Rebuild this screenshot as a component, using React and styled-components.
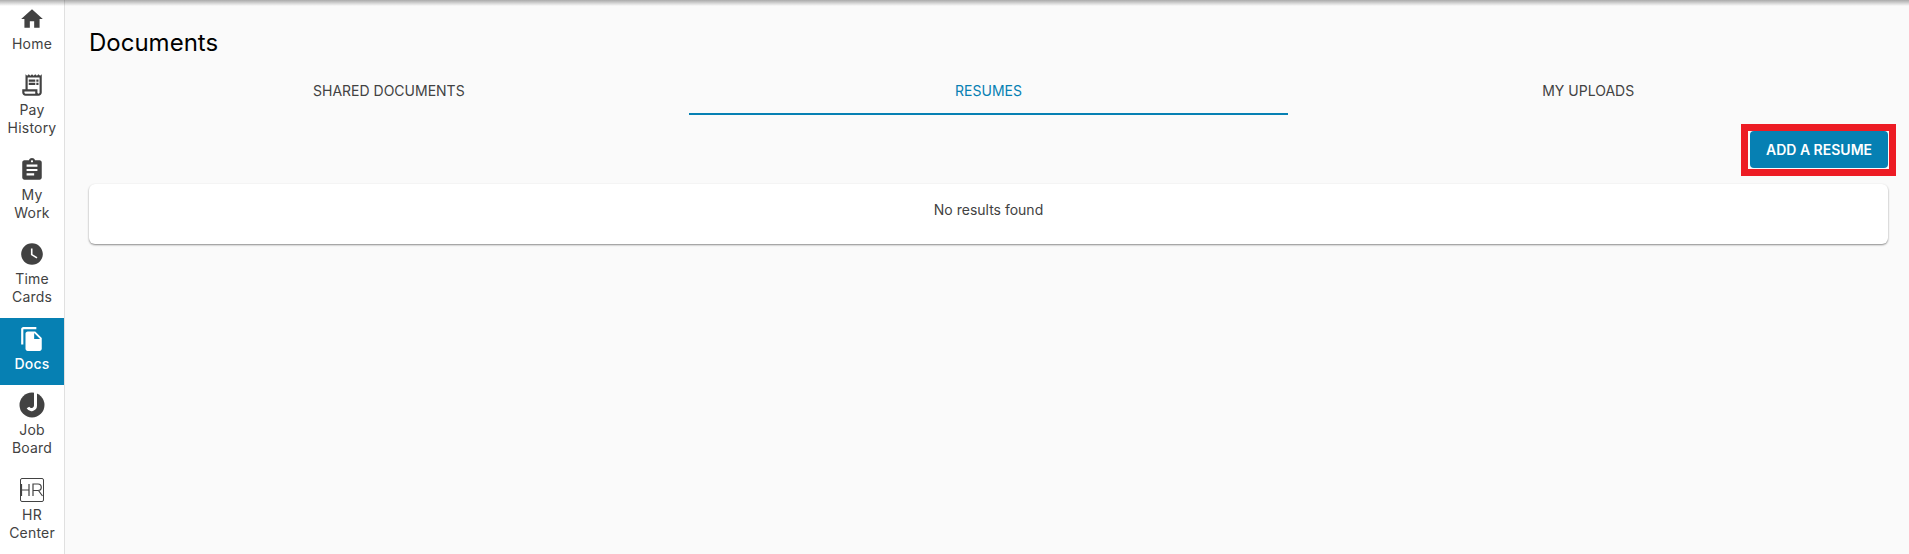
import React from "react";
import styled, { createGlobalStyle } from "styled-components";
import { MdHome, MdOutlineReceiptLong, MdAssignment, MdWatchLater, MdFileCopy } from "react-icons/md";

const GlobalStyle = createGlobalStyle`
  html, body {
    margin: 0;
    height: 100%;
    overflow: hidden;
    background: #fafafa;
    font-family: Inter, "Liberation Sans", sans-serif;
  }
`;

const Page = styled.div`
  display: flex;
  height: 554px;
  position: relative;
  overflow: hidden;

  &::before {
    content: "";
    position: absolute;
    top: 0;
    left: 0;
    right: 0;
    height: 6px;
    background: linear-gradient(rgba(0, 0, 0, 0.32), rgba(0, 0, 0, 0));
  }
`;

const SideNav = styled.nav`
  width: 64px;
  flex-shrink: 0;
  margin-top: -2px;
  height: 556px;
  overflow: hidden;
  background: #fff;
  border-right: 1px solid #e0e0e0;
`;

const NavItem = styled.div`
  height: ${({ $lines }) => ($lines === 2 ? 84.4 : 66.8)}px;
  box-sizing: border-box;
  padding-top: 4.6px;
  display: flex;
  flex-direction: column;
  align-items: center;
  background: ${({ $active }) => ($active ? "#0680b3" : "transparent")};
  color: ${({ $active }) => ($active ? "#fff" : "#424242")};
  font-size: 14px;
  letter-spacing: 0.2px;
  line-height: 18px;
  text-align: center;
  font-weight: ${({ $active }) => ($active ? 500 : 400)};
`;

const NavIcon = styled.div`
  width: 32px;
  height: 32px;
  display: flex;
  align-items: center;
  justify-content: center;
  font-size: 26px;
`;

const Main = styled.main`
  flex: 1;
  min-width: 0;
  padding: 29px 21px 0 24px;
`;

const Title = styled.h1`
  margin: 0 0 15px;
  font-size: 24px;
  line-height: 28px;
  font-weight: 400;
  color: #000;
`;

const Tabs = styled.div`
  display: flex;
`;

const Tab = styled.div`
  flex: 1;
  height: 43px;
  box-sizing: border-box;
  display: flex;
  align-items: center;
  justify-content: center;
  padding-bottom: 5px;
  font-size: 14px;
  font-weight: 400;
  color: ${({ $active }) => ($active ? "#0680b3" : "#424242")};
  border-bottom: 2px solid ${({ $active }) => ($active ? "#0680b3" : "transparent")};
`;

const Actions = styled.div`
  display: flex;
  justify-content: flex-end;
  padding: 16px 0;
`;

const Button = styled.button`
  position: relative;
  width: 138px;
  height: 37px;
  border: 0;
  border-radius: 4px;
  background: #0680b3;
  color: #fff;
  font: 600 14px Inter, "Liberation Sans", sans-serif;

  /* red annotation frame drawn over the button */
  &::after {
    content: "";
    position: absolute;
    top: -7px;
    left: -9px;
    right: -8px;
    bottom: -8px;
    border: 7px solid #ed1c24;
    pointer-events: none;
  }

  &::before {
    content: "";
    position: absolute;
    z-index: -1;
    top: 0;
    left: -2px;
    right: -1px;
    bottom: -1px;
    background: #d5dde1;
  }
`;

const Card = styled.div`
  height: 60px;
  display: flex;
  align-items: center;
  justify-content: center;
  padding-bottom: 10px;
  box-sizing: border-box;
  background: #fff;
  border-radius: 6px;
  box-shadow: 0 1px 2px rgba(0, 0, 0, 0.45);
  font-size: 14px;
  color: #424242;
`;

const JobIcon = () => (
  <svg width="26" height="26" viewBox="0 0 26 26">
    <circle cx="13" cy="13" r="12.500" fill="currentColor" />
    <path fill="none" stroke="#fff" strokeWidth="3" d="M16.500 0V13.500a4 4 0 0 1-7.500 2" />
  </svg>
);

const HrIcon = () => (
  <svg width="26" height="26" viewBox="0 0 26 26" fill="none" stroke="currentColor">
    <rect x="1.500" y="1.500" width="23" height="23" rx="1.500" strokeWidth="1" />
    <path d="M2.500 7v12M10 7v12M2.500 13h7.500M14 19V7h5a3 3 0 0 1 0 6.500h-5M19.500 13.500l4 5.500" strokeWidth="1.200" />
  </svg>
);

const navItems = [
  { id: "home", lines: ["Home"], icon: <MdHome /> },
  { id: "pay", lines: ["Pay", "History"], icon: <MdOutlineReceiptLong /> },
  { id: "work", lines: ["My", "Work"], icon: <MdAssignment /> },
  { id: "time", lines: ["Time", "Cards"], icon: <MdWatchLater /> },
  { id: "docs", lines: ["Docs"], icon: <MdFileCopy />, active: true },
  { id: "job", lines: ["Job", "Board"], icon: <JobIcon /> },
  { id: "hr", lines: ["HR", "Center"], icon: <HrIcon /> },
];

const tabs = ["SHARED DOCUMENTS", "RESUMES", "MY UPLOADS"];

const App = () => {
  return (
    <Page>
      <GlobalStyle />
      <SideNav>
        {navItems.map((item) => (
          <NavItem key={item.id} $lines={item.lines.length} $active={item.active}>
            <NavIcon>{item.icon}</NavIcon>
            {item.lines.map((line) => (
              <div key={line}>{line}</div>
            ))}
          </NavItem>
        ))}
      </SideNav>
      <Main>
        <Title>Documents</Title>
        <Tabs>
          {tabs.map((tab) => (
            <Tab key={tab} $active={tab === "RESUMES"}>{tab}</Tab>
          ))}
        </Tabs>
        <Actions>
          <Button>ADD A RESUME</Button>
        </Actions>
        <Card>No results found</Card>
      </Main>
    </Page>
  );
};

export default App;
